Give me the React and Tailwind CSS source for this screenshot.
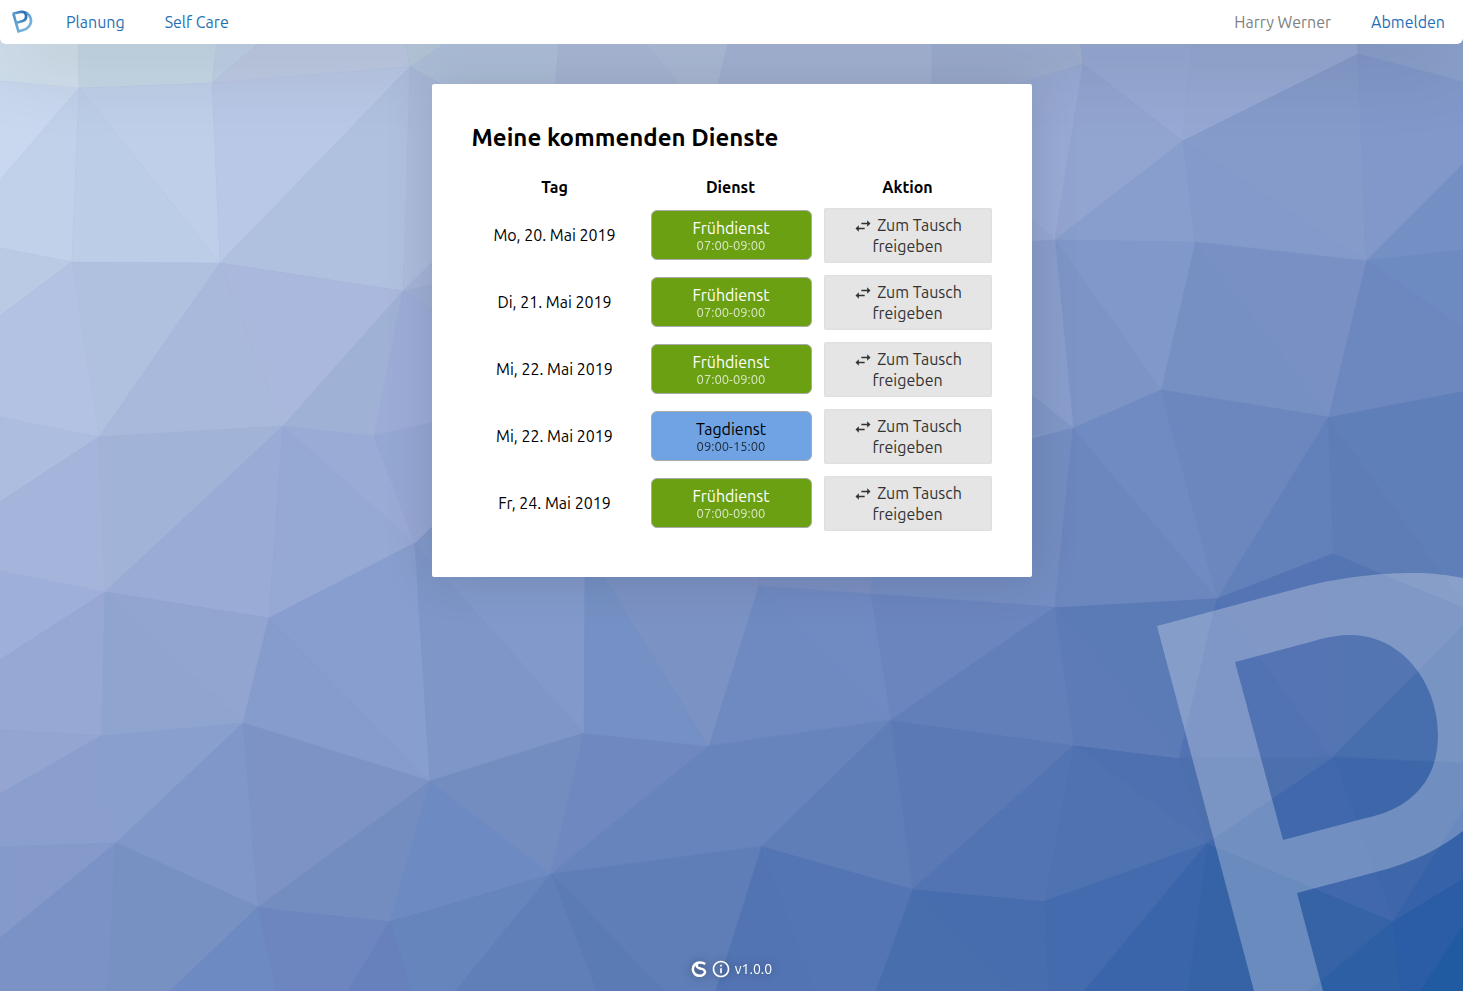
import { MdInfoOutline, MdSwapHoriz } from "react-icons/md";

const shifts = [
  { day: "Mo, 20. Mai 2019", name: "Frühdienst", time: "07:00-09:00", kind: "early" },
  { day: "Di, 21. Mai 2019", name: "Frühdienst", time: "07:00-09:00", kind: "early" },
  { day: "Mi, 22. Mai 2019", name: "Frühdienst", time: "07:00-09:00", kind: "early" },
  { day: "Mi, 22. Mai 2019", name: "Tagdienst", time: "09:00-15:00", kind: "day" },
  { day: "Fr, 24. Mai 2019", name: "Frühdienst", time: "07:00-09:00", kind: "early" },
];

// Low-poly backdrop: [fill, polygon points]
const facets = [
  ["#d0dfec", "0,0 78,0 79,88 0,81"],
  ["#c5d7e6", "78,0 222,0 212,83 79,88"],
  ["#bfd0e6", "222,0 310,0 212,83"],
  ["#bdcae3", "310,0 398,0 410,67 212,83"],
  ["#b9cade", "398,0 510,0 410,67"],
  ["#b2c4df", "510,0 562,0 553,120 480,105 410,67"],
  ["#adbbdb", "562,0 610,0 740,120 553,120"],
  ["#b0bfdc", "610,0 738,0 710,120"],
  ["#a7b7d9", "738,0 932,0 932,120 710,120"],
  ["#9fb0d3", "932,0 1030,0 1083,64 932,111"],
  ["#a2b2d2", "1030,0 1075,0 1083,64"],
  ["#c9d8ee", "0,81 79,88 0,180"],
  ["#c1d1ea", "0,180 79,88 72,262 0,248"],
  ["#bccde7", "79,88 220,263 72,262"],
  ["#bfcfe9", "79,88 212,83 220,263"],
  ["#b9c8e6", "212,83 410,67 220,263"],
  ["#b0c1e0", "410,67 403,291 220,263"],
  ["#adbcdd", "410,67 480,105 480,220 403,291"],
  ["#a4b4d8", "403,291 480,215 480,275"],
  ["#9eaed5", "403,291 480,275 480,340"],
  ["#bacae5", "0,248 72,262 0,316"],
  ["#b3c2e2", "0,316 72,262 99,437 0,417"],
  ["#b0c1e0", "72,262 220,263 99,437"],
  ["#a9b9dc", "220,263 283,426 99,437"],
  ["#a9b8dc", "220,263 403,291 283,426"],
  ["#a0b1d6", "403,291 374,436 283,426"],
  ["#9cacd7", "403,291 480,340 480,412 374,436"],
  ["#adbddf", "0,417 99,437 0,502"],
  ["#a4b4da", "0,502 99,437 105,592 0,571"],
  ["#a2b3d8", "99,437 283,426 105,592"],
  ["#9aacd6", "283,426 269,618 105,592"],
  ["#96a8d4", "283,426 415,543 269,618"],
  ["#9aabd6", "283,426 374,436 415,543"],
  ["#95a7d3", "374,436 480,412 480,480 415,543"],
  ["#9eb0da", "0,571 105,592 0,660"],
  ["#97a8d4", "0,660 105,592 101,736 0,730"],
  ["#90a4d0", "105,592 243,723 101,736"],
  ["#92a4d0", "105,592 269,618 243,723"],
  ["#869ccc", "269,618 430,781 243,723"],
  ["#889ece", "415,543 430,781 269,618"],
  ["#7e96c8", "415,543 584,733 430,781"],
  ["#829acb", "415,543 585,553 584,733"],
  ["#94a5d1", "0,730 101,736 0,794"],
  ["#8a9fce", "0,794 101,736 116,843 0,847"],
  ["#899fcd", "101,736 243,723 116,843"],
  ["#8098c9", "243,723 258,907 116,843"],
  ["#7d93c6", "243,723 430,781 258,907"],
  ["#859aca", "0,847 116,843 0,938"],
  ["#7b92c6", "0,938 116,843 108,991 0,991"],
  ["#7791c3", "116,843 258,907 170,991 108,991"],
  ["#6e8ac2", "258,907 276,991 170,991"],
  ["#6d86bf", "258,907 390,921 348,991 276,991"],
  ["#6681bc", "390,921 412,991 348,991"],
  ["#6585bc", "390,921 551,874 455,991 412,991"],
  ["#738dc1", "258,907 430,781 390,921"],
  ["#6e8ac2", "430,781 551,874 390,921"],
  ["#738dc1", "430,781 584,733 551,874"],
  ["#6f88c0", "584,733 709,746 551,874"],
  ["#7590c4", "585,545 709,746 584,733"],
  ["#7b92c4", "585,545 700,565 759,586 709,746"],
  ["#7e91c3", "700,500 760,500 759,586 700,568"],
  ["#7a90c2", "760,500 880,500 871,594 759,586"],
  ["#748dc2", "880,480 1073,428 1055,607 871,594"],
  ["#6e8ac1", "759,586 891,720 709,746"],
  ["#708ac2", "759,586 871,594 891,720"],
  ["#6b85be", "871,594 1055,607 891,720"],
  ["#6784bc", "709,746 891,720 762,846 551,874"],
  ["#5f7eb8", "551,874 762,846 716,991 665,991"],
  ["#5b7bb5", "551,874 665,991 596,991"],
  ["#607fb9", "551,874 596,991 455,991"],
  ["#5274b3", "762,846 815,991 716,991"],
  ["#5375b4", "762,846 913,889 876,991 815,991"],
  ["#5f7eb8", "891,720 913,889 762,846"],
  ["#5b79b5", "891,720 1074,745 913,889"],
  ["#627fb9", "1055,607 1074,745 891,720"],
  ["#486eae", "913,889 1010,991 876,991"],
  ["#476dae", "913,889 1045,901 1048,991 1010,991"],
  ["#5274b2", "1074,745 1045,901 913,889"],
  ["#4f72b1", "1074,745 1207,843 1045,901"],
  ["#4e70b0", "1074,745 1179,758 1207,843"],
  ["#5c7bb7", "1055,607 1179,758 1074,745"],
  ["#5b7bb7", "1055,607 1217,598 1179,758"],
  ["#436bad", "1045,901 1207,843 1084,991 1048,991"],
  ["#3b65aa", "1207,843 1188,991 1084,991"],
  ["#3563a6", "1207,843 1393,921 1308,991 1188,991"],
  ["#2c5fa4", "1393,921 1400,991 1308,991"],
  ["#2a5da6", "1393,921 1463,878 1463,925 1420,991 1400,991"],
  ["#205ba1", "1463,925 1463,991 1420,991"],
  ["#5273b3", "1217,598 1333,757 1179,758"],
  ["#5574b4", "1217,598 1333,553 1333,757"],
  ["#5375b2", "1333,553 1463,607 1463,626 1333,757"],
  ["#486fad", "1333,757 1463,626 1463,763"],
  ["#3e67aa", "1333,757 1463,763 1463,810 1393,921"],
  ["#4168ac", "1207,843 1333,757 1393,921"],
  ["#4c6fae", "1179,758 1333,757 1207,843"],
  ["#3562a8", "1463,810 1463,878 1393,921"],
  ["#6281bb", "1328,417 1333,553 1217,598"],
  ["#5e7db7", "1328,417 1463,600 1463,607 1333,553"],
  ["#5f7fb8", "1328,417 1463,391 1463,600"],
  ["#97a9d4", "1083,64 1075,0 1150,0 1196,0 1183,141"],
  ["#96a8d2", "1196,0 1354,0 1358,54 1183,141"],
  ["#8b9fcc", "1354,0 1440,0 1358,54"],
  ["#8aa0cb", "1440,0 1463,0 1463,82 1358,54"],
  ["#99abd5", "1000,89 1083,64 1055,240 1000,190"],
  ["#92a4d0", "1083,64 1183,141 1055,240"],
  ["#889ecc", "1183,141 1195,242 1055,240"],
  ["#839acb", "1183,141 1366,261 1195,242"],
  ["#859bca", "1183,141 1358,54 1366,261"],
  ["#8298ca", "1358,54 1463,82 1463,164 1366,261"],
  ["#748fc3", "1463,164 1463,250 1366,261"],
  ["#6d8ac1", "1463,250 1463,328 1366,261"],
  ["#6d87bf", "1366,261 1463,328 1463,391 1328,417"],
  ["#7990c4", "1195,242 1366,261 1328,417"],
  ["#7690c4", "1195,242 1328,417 1161,390"],
  ["#8098ca", "1055,240 1195,242 1161,390"],
  ["#7d95c6", "1055,240 1161,390 1073,428"],
  ["#95a7d2", "1000,190 1055,240 1000,244"],
  ["#899ecc", "1000,244 1055,240 1073,428 1000,370"],
  ["#8097c7", "1000,370 1073,428 1000,440"],
  ["#6c86be", "1073,428 1217,598 1055,607"],
  ["#708bc2", "1073,428 1161,390 1217,598"],
  ["#6c87be", "1161,390 1328,417 1217,598"],
];

function Backdrop() {
  return (
    <svg
      className="absolute inset-0 -z-10 h-full w-full"
      viewBox="0 0 1463 991"
      preserveAspectRatio="xMidYMid slice"
      aria-hidden="true"
    >
      <rect width="1463" height="991" fill="#829acb" />
      {facets.map(([fill, points], i) => (
        <polygon key={i} points={points} fill={fill} stroke={fill} strokeWidth="0.6" />
      ))}
      <path
        fill="#fff"
        fillOpacity="0.26"
        fillRule="evenodd"
        d="M1157 626L1303 587C1345 576 1385 573 1412 573C1432 573 1448 575 1463 578V831C1440 849 1412 863 1376 872L1297 893L1323 991H1254ZM1235 662L1314 641C1330 636 1342 635 1352 635C1402 636 1438 683 1438 735C1438 778 1414 808 1366 818L1283 840Z"
      />
    </svg>
  );
}

function BrandMark() {
  return (
    <svg className="size-11" viewBox="0 0 44 44" fill="none" aria-hidden="true">
      <defs>
        <linearGradient id="brand-outer" x1="14" y1="12" x2="30" y2="30" gradientUnits="userSpaceOnUse">
          <stop offset="0" stopColor="#4a8fca" />
          <stop offset="1" stopColor="#7fb8dc" />
        </linearGradient>
        <linearGradient id="brand-inner" x1="14" y1="20" x2="26" y2="14" gradientUnits="userSpaceOnUse">
          <stop offset="0" stopColor="#6ba9d6" />
          <stop offset="1" stopColor="#2a6cb2" />
        </linearGradient>
      </defs>
      <path
        d="M13.4 13.6L18.4 31.4L22.5 30.3C28.5 28.7 32 24 30.8 18.8C29.7 13.8 25.4 11.3 20.6 12.3"
        stroke="url(#brand-outer)"
        strokeWidth="2.6"
      />
      <path
        d="M12.6 13.7L20 11.9C23.4 11.1 25.4 12.6 25.9 15C26.6 18 25 20.4 22 21.2L16.4 22.7"
        stroke="url(#brand-inner)"
        strokeWidth="2.6"
      />
    </svg>
  );
}

function SMark() {
  return (
    <svg className="size-4" viewBox="0 0 16 16" fill="none" stroke="#fff" aria-hidden="true">
      <path
        d="M14.2 3C11.2 0.9 6.4 0.8 3.8 3.4C1.2 6 1.2 10.6 3.8 13C6.4 15.4 11 15.4 13 13.2C15 11 13.6 8.5 11 7.9C8.4 7.3 5.9 7.1 5.7 5C5.6 3.9 6 3.2 6.8 2.6"
        strokeWidth="2.5"
      />
    </svg>
  );
}

function ShiftBadge({ name, time, kind }) {
  const early = kind === "early";
  return (
    <div
      className={
        "rounded-md border border-[#aaaaaa] py-[7px] text-center " +
        (early ? "bg-[#6aa012] text-white" : "bg-[#70a3e3] text-black")
      }
    >
      <div className="leading-5">{name}</div>
      <div className="text-[13px] leading-[14px] opacity-75">{time}</div>
    </div>
  );
}

export default function App() {
  return (
    <div className="relative isolate flex min-h-screen flex-col overflow-hidden font-['Ubuntu','Noto_Sans',sans-serif] text-base text-black">
      <Backdrop />
      <header className="flex h-11 items-center justify-between rounded-b-md bg-white pr-[18px] text-[#1f6fb5] shadow-[0_20px_80px_rgba(0,0,0,0.12)]">
        <nav className="flex items-center gap-10">
          <a href="#start" aria-label="Startseite" className="-mr-[18px]">
            <BrandMark />
          </a>
          <a href="#planung">Planung</a>
          <a href="#selfcare">Self Care</a>
        </nav>
        <div className="flex items-center gap-10">
          <span className="text-[#808080]">Harry Werner</span>
          <a href="#abmelden">Abmelden</a>
        </div>
      </header>

      <main className="flex-1 px-4 py-10">
        <section className="mx-auto max-w-[600px] rounded-xs bg-white p-10 shadow-[0_0_50px_rgba(0,0,0,0.13)]">
          <h1 className="mb-5 text-2xl leading-7 font-bold">Meine kommenden Dienste</h1>
          <table className="w-full table-fixed text-center">
            <thead>
              <tr className="h-[30px]">
                <th className="w-[166px] font-bold">Tag</th>
                <th className="w-[186px] font-bold">Dienst</th>
                <th className="font-bold">Aktion</th>
              </tr>
            </thead>
            <tbody>
              {shifts.map((shift, i) => (
                <tr key={i}>
                  <td className="pt-1 pb-1.5">{shift.day}</td>
                  <td className="pt-1 pr-3 pb-1.5 pl-[13px]">
                    <ShiftBadge {...shift} />
                  </td>
                  <td className="py-1.5">
                    <button
                      type="button"
                      className="block w-full rounded-xs bg-[#e5e5e5] px-6 pt-[7px] pb-[6px] leading-[21px] text-[#333333] shadow-[inset_0_0_3px_rgba(0,0,0,0.06)]"
                    >
                      <MdSwapHoriz className="mr-1 inline size-5 align-[-5px]" aria-hidden="true" />
                      Zum Tausch freigeben
                    </button>
                  </td>
                </tr>
              ))}
            </tbody>
          </table>
        </section>
      </main>

      <footer className="flex items-center justify-center gap-1 pb-3 text-sm text-white drop-shadow-[0_0_5px_rgba(0,0,0,0.4)]">
        <a href="#anbieter" aria-label="Anbieter">
          <SMark />
        </a>
        <a href="#info" className="flex items-center gap-1">
          <MdInfoOutline className="size-5" aria-hidden="true" />
          v1.0.0
        </a>
      </footer>
    </div>
  );
}
